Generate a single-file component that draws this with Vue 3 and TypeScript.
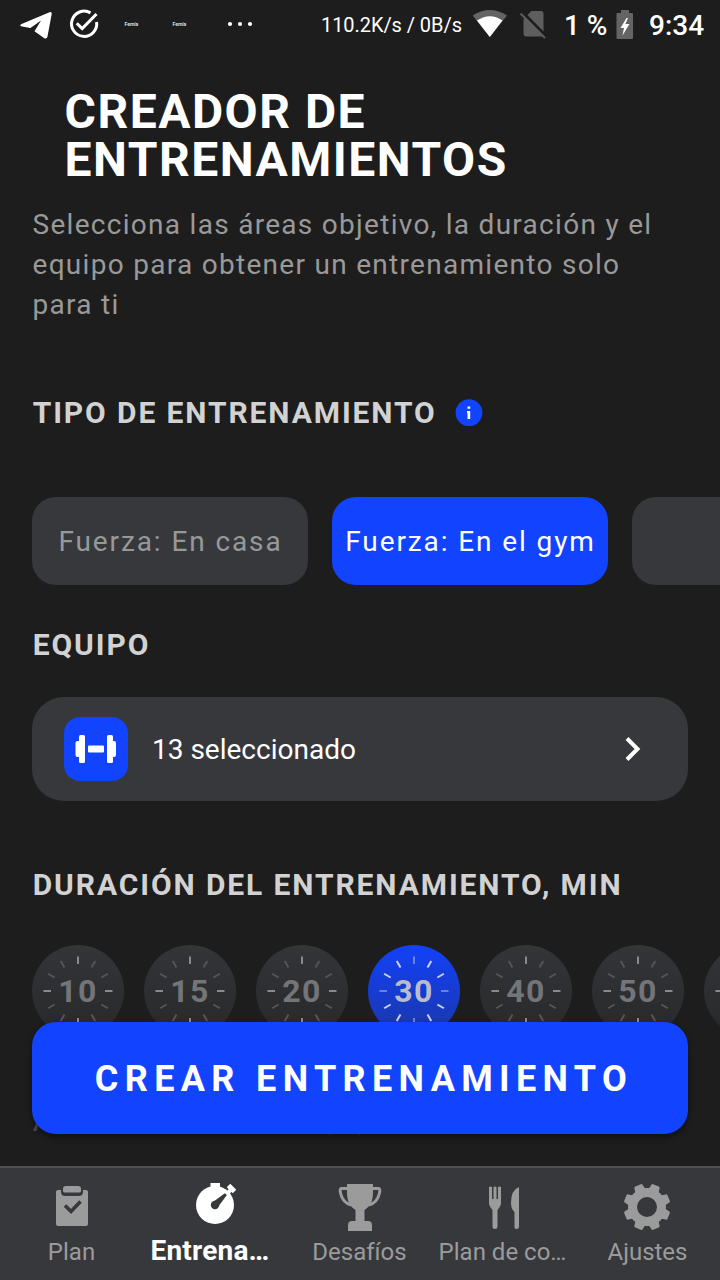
<script setup lang="ts">
interface Duration { minutes: number | null; active?: boolean }
interface NavItem { id: string; label: string; active?: boolean }

const durations: Duration[] = [
  { minutes: 10 }, { minutes: 15 }, { minutes: 20 }, { minutes: 30, active: true },
  { minutes: 40 }, { minutes: 50 }, { minutes: null },
]
const ticks: number[] = Array.from({ length: 12 }, (_, i) => i * 30)
const teeth: number[] = Array.from({ length: 8 }, (_, i) => i * 45 + 22.5)
const navItems: NavItem[] = [
  { id: 'plan', label: 'Plan' },
  { id: 'train', label: 'Entrena…', active: true },
  { id: 'cup', label: 'Desafíos' },
  { id: 'food', label: 'Plan de co…' },
  { id: 'settings', label: 'Ajustes' },
]
</script>

<template>
  <div class="screen">
    <header class="status">
      <svg class="status-left" width="270" height="50" viewBox="0 0 270 50">
        <path d="M21 24.2 49.5 12.2Q52 11.3 51.7 14L47.5 36.5Q46.8 39.5 44 38L34.5 31.2 41 20.5 30.5 28 22 26.5Q19 25.5 21 24.2Z" fill="#fff" />
        <path d="M90.5 12.9A12.6 12.6 0 1 0 96.6 22M76.8 23.2 82.2 28.6 96.5 14" fill="none" stroke="#fff" stroke-width="3" />
        <g fill="#fff"><circle cx="230" cy="24" r="2.1" /><circle cx="240" cy="24" r="2.1" /><circle cx="250" cy="24" r="2.1" /></g>
        <g class="mini"><text x="124.5" y="25.8">Femia</text><text x="172.5" y="25.8">Femia</text></g>
      </svg>
      <span class="speed">110.2K/s / 0B/s</span>
      <svg class="status-icons" width="76" height="50" viewBox="0 0 76 50">
        <path d="M-0.500 15.5Q17 4.500 34 15.500L16.800 37Z" fill="#646464" />
        <path d="M4 20.500Q17 12 29.500 20.500L16.800 37Z" fill="#fff" />
        <path d="M58.500 11H68Q70.500 11 70.500 14V36.500H53.500Q50.500 36.500 50.500 33.500V19Z" fill="#5e5e5e" />
        <path d="M49.500 12.200 73 36" stroke="#1d1d1d" stroke-width="3" />
        <path d="M47.500 13.500 72 38" stroke="#5e5e5e" stroke-width="2" />
      </svg>
      <span class="percent">1&nbsp;%</span>
      <svg class="battery" width="18" height="30" viewBox="0 0 18 30">
        <path d="M5 0H13V3H16Q17 3 17 4V28Q17 29 16 29H1.500Q.5 29 .5 28V4Q.5 3 1.500 3H5Z" fill="#646464" />
        <path d="M10.500 8 4.500 18H8L6.500 25.500 13.500 14H9.500L12 8Z" fill="#fff" />
      </svg>
      <span class="clock">9:34</span>
    </header>

    <main class="content">
      <h1>CREADOR DE<br />ENTRENAMIENTOS</h1>
      <p class="intro">Selecciona las áreas objetivo, la duración y el<br />equipo para obtener un entrenamiento solo<br />para ti</p>

      <h2 class="type-title">
        <span>TIPO DE ENTRENAMIENTO</span>
        <svg width="28" height="28" viewBox="0 0 28 28">
          <circle cx="14" cy="13.700" r="13.400" fill="#1244ff" />
          <path d="M12.500 7.500H15.200V9.700H12.500ZM12 11.900H15.200V19.900H12.500V13.900H12Z" fill="#fff" />
        </svg>
      </h2>
      <div class="types">
        <button class="type">Fuerza: En casa</button>
        <button class="type selected">Fuerza: En el gym</button>
        <button class="type"></button>
      </div>

      <h2 class="equipment-title">EQUIPO</h2>
      <button class="equipment">
        <span class="equipment-icon">
          <svg width="64" height="64" viewBox="0 0 64 64" fill="#fff">
            <rect x="15" y="18" width="6" height="28" rx="1.500" /><rect x="11.500" y="24" width="5" height="16" rx="2" />
            <rect x="24" y="28.500" width="16" height="7" rx="1" />
            <rect x="43" y="18" width="6" height="28" rx="1.500" /><rect x="47" y="24" width="5" height="16" rx="2" />
          </svg>
        </span>
        <span class="equipment-label">13 seleccionado</span>
        <svg class="chevron" width="20" height="28" viewBox="0 0 20 28"><path d="M3 3.500 13.500 14 3 24.500" fill="none" stroke="#fff" stroke-width="4" /></svg>
      </button>

      <h2 class="duration-title">DURACIÓN DEL ENTRENAMIENTO, MIN</h2>
      <div class="durations">
        <div v-for="(item, i) in durations" :key="i" class="dial" :class="{ chosen: item.active }">
          <svg width="92" height="92" viewBox="0 0 92 92">
            <line v-for="angle in ticks" :key="angle" x1="46" x2="46" y1="11.500" y2="19"
              :transform="`rotate(${angle} 46 46)`" :class="{ cardinal: angle % 90 === 0 }" />
          </svg>
          <span v-if="item.minutes" class="minutes">{{ item.minutes }}</span>
        </div>
      </div>

      <svg class="covered" width="340" height="16" viewBox="0 0 340 16" fill="#4a4b4d">
        <path d="M0 10 3 2H6L3.500 10Z" /><path d="M295 12H297.500V14H296ZM325 12H327.500L326.500 14H325Z" opacity=".6" />
      </svg>
      <button class="create">CREAR ENTRENAMIENTO</button>
    </main>

    <nav class="tabs">
      <div v-for="item in navItems" :key="item.id" class="tab" :class="[item.id, { current: item.active }]">
        <svg width="56" height="56" viewBox="0 0 56 56" fill="currentColor">
          <template v-if="item.id === 'plan'">
            <path d="M14 12H17V14Q17 18 21 18H35Q39 18 39 14V12H42Q44 12 44 14V46Q44 48 42 48H14Q12 48 12 46V14Q12 12 14 12Z" />
            <path d="M22 8H34Q37 8 37 11V13Q37 14.500 34 14.500H22Q19 14.500 19 13V11Q19 8 22 8Z" />
            <path d="M21 27.500 27 33.500 36.500 23.500" fill="none" stroke="#37383b" stroke-width="3.600" />
          </template>
          <template v-else-if="item.id === 'train'">
            <circle cx="27" cy="27" r="19" />
            <path d="M22.500 5H32V10H22.500Z" />
            <path d="M37 18 43.500 11" stroke="currentColor" stroke-width="4" />
            <path d="M40.500 7.500 46.500 13.500" stroke="currentColor" stroke-width="5" />
            <circle cx="27" cy="27" r="4.200" fill="#37383b" /><path d="M25 24 36.500 15.500Q38.500 15 38.500 17.500L30 29Z" fill="#37383b" />
          </template>
          <template v-else-if="item.id === 'cup'">
            <path d="M15 6H41V14C41 24 38 28 32.500 32V43H36Q40 43 40 47V53H16V47Q16 43 20 43H23.500V32C18 28 15 24 15 14Z" />
            <path d="M17 10.500H9.500Q7.500 10.500 8.500 15 10.500 24.500 19 27M39 10.500H46.500Q48.500 10.500 47.500 15 45.500 24.500 37 27" fill="none" stroke="currentColor" stroke-width="3" />
          </template>
          <template v-else-if="item.id === 'food'">
            <path d="M13 9Q14.500 8 16 9V21H17.500V9Q19 8 20.500 9V21H22V9Q23.500 8 25 9V25Q25 28 21.500 32V49Q21.500 51 19 51T16.500 49V32Q13 28 13 25ZM43 9V49Q43 51 40.500 51T38.500 49V34Q35 31 35 25 35 12 43 9Z" />
          </template>
          <template v-else>
            <circle cx="27" cy="29" r="14.500" fill="none" stroke="currentColor" stroke-width="9" />
            <path v-for="angle in teeth" :key="angle" d="M21.500 13 22.500 7Q22.700 5.600 24 5.600H30Q31.300 5.600 31.500 7L32.500 13Z" :transform="`rotate(${angle} 27 29)`" />
          </template>
        </svg>
        <span>{{ item.label }}</span>
      </div>
    </nav>
  </div>
</template>

<style>
html, body { margin: 0; background: #1d1d1d; }
</style>

<style scoped>
* { box-sizing: border-box; }
.screen { width: 720px; height: 1280px; overflow: hidden; display: flex; flex-direction: column; background: #1d1d1d; color: #fff; font-family: Roboto, sans-serif; }
button { border: 0; padding: 0; color: inherit; font: inherit; white-space: nowrap; }
h1, h2, p { margin: 0; white-space: nowrap; }
svg { display: block; flex-shrink: 0; }
.status { height: 50px; flex-shrink: 0; display: flex; align-items: center; white-space: nowrap; }
.mini { font: 700 5px Roboto, sans-serif; fill: #ddd; }
.speed { width: 152px; margin-left: 51px; font-size: 20px; letter-spacing: -.060px; }
.percent { width: 51px; margin-left: 15px; font-size: 28px; font-weight: 500; }
.battery { margin-left: 1px; margin-top: -1px; }
.clock { margin-left: 15px; font-size: 28px; font-weight: 500; }
.content { position: relative; flex: 1; min-height: 0; display: flex; flex-direction: column; overflow: hidden; }
h1 { margin: 38px 0 0 64.500px; font-size: 48px; line-height: 48px; font-weight: 700; letter-spacing: 1.500px; }
.intro { margin: 21px 0 0 32.500px; font-size: 28px; line-height: 40px; letter-spacing: 1.290px; color: #999; }
h2 { margin-left: 32.700px; font-size: 30px; line-height: 36px; font-weight: 700; letter-spacing: 1.900px; color: #d2d2d2; }
.type-title { margin-top: 70px; display: flex; align-items: center; gap: 18px; }
.types { margin: 66px 0 0 32px; display: flex; gap: 24px; }
.type { flex: 0 0 276px; height: 88px; border-radius: 24px; background: #37383b; color: #97989a; font-size: 28px; letter-spacing: 1.900px; padding-left: 1px; }
.selected { background: #1244ff; color: #fff; }
.equipment-title { margin-top: 42px; }
.equipment { display: flex; align-items: center; height: 104px; flex-shrink: 0; margin: 34px 32px 0; padding-left: 32px; border-radius: 32px; background: #37383b; text-align: left; }
.equipment-icon { width: 64px; height: 64px; border-radius: 16px; background: #1244ff; }
.equipment-label { flex: 1; margin-left: 24px; font-size: 28px; }
.chevron { margin-right: 44.500px; }
.duration-title { margin-top: 66px; }
.durations { display: flex; gap: 20px; margin: 42px 0 0 32px; }
.dial { position: relative; flex: 0 0 92px; height: 92px; border-radius: 50%; display: grid; place-items: center; background: linear-gradient(#343538, #27282a); color: #747578; }
.dial svg { grid-area: 1 / 1; }
.dial line { stroke: #545558; stroke-width: 2; }
.dial line.cardinal { stroke: #8a8b8d; }
.minutes { grid-area: 1 / 1; font-size: 32px; font-weight: 700; letter-spacing: 1.500px; }
.chosen { background: linear-gradient(#1341f8, #1a37aa); color: #b9bccb; }
.chosen line { stroke: #cad3f5; }
.chosen line.cardinal { stroke: #6c83d5; }
.covered { position: absolute; left: 33px; top: 1071px; }
.create { position: absolute; left: 32px; right: 32px; bottom: 32px; height: 112px; border-radius: 24px; background: #1244ff; font-size: 36px; font-weight: 700; letter-spacing: 6.360px; padding: 2px 0 0 8px; box-shadow: 0 3px 6px #0007; }
.tabs { height: 114px; flex-shrink: 0; display: grid; grid-template-columns: repeat(5, 144px); border-top: 2px solid #505052; background: #37383b; color: #9b9b9c; }
.tab { display: flex; flex-direction: column; align-items: center; padding-top: 10px; font-size: 24px; line-height: 32px; white-space: nowrap; }
.tab svg { margin-bottom: 2px; }
.tab span { margin-right: 1px; }
.tab.food span { margin-right: 3px; }
.tab.current { color: #fff; font-size: 28px; font-weight: 700; }
.tab.current svg { margin-bottom: 1px; }
.tab.current span { margin-right: 12px; letter-spacing: .2px; }
</style>
